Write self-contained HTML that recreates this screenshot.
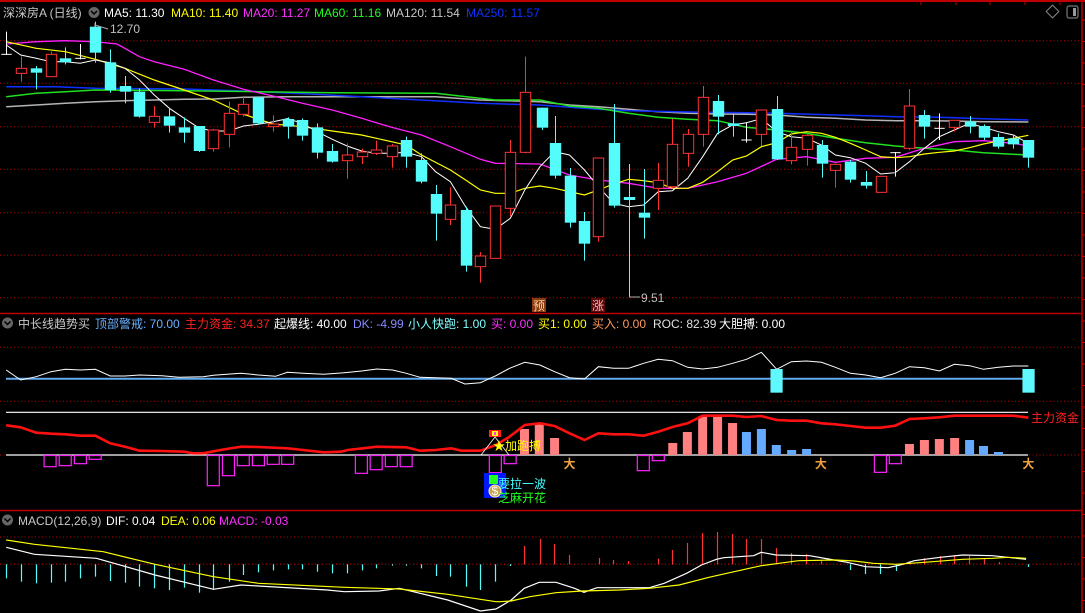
<!DOCTYPE html>
<html><head><meta charset="utf-8"><style>
html,body{margin:0;padding:0;background:#000;overflow:hidden}
svg{display:block}
text{font-family:"Liberation Sans","Noto Sans CJK SC",sans-serif;font-size:12px}
</style></head><body>
<svg id="s" width="1085" height="613" viewBox="0 0 1085 613" xmlns="http://www.w3.org/2000/svg">
<rect width="1085" height="613" fill="#000"/>
<!-- borders -->
<line x1="0" y1="1" x2="1085" y2="1" stroke="#c00000" stroke-width="2"/>
<line x1="1082" y1="0" x2="1082" y2="613" stroke="#c00000" stroke-width="1.5"/>
<line x1="0" y1="313.5" x2="1082" y2="313.5" stroke="#c00000" stroke-width="1.5"/>
<line x1="0" y1="510.5" x2="1082" y2="510.5" stroke="#c00000" stroke-width="1.5"/>
<g stroke="#c00000"><line x1="921" y1="0" x2="921" y2="5"/><line x1="956" y1="0" x2="956" y2="5"/><line x1="990" y1="0" x2="990" y2="5"/><line x1="1025" y1="0" x2="1025" y2="5"/><line x1="1060" y1="0" x2="1060" y2="5"/></g>
<!-- top right icons -->
<rect x="1048" y="7" width="9" height="9" fill="none" stroke="#888" transform="rotate(45 1052.5 11.5)"/>
<rect x="1067" y="6" width="11" height="12" rx="2" fill="none" stroke="#777" stroke-width="1.2"/>
<rect x="1073" y="8" width="3" height="8" fill="#999"/>
<g id="g"></g>
<!-- header main -->
<text x="3" y="17" fill="#c8c8c8">深深房A (日线)</text>
<circle cx="94" cy="12.5" r="5.5" fill="#666"/><path d="M91 11 L94 14 L97 11" stroke="#000" stroke-width="1.5" fill="none"/>
<text x="104" y="17" fill="#fff">MA5: 11.30</text>
<text x="171" y="17" fill="#ffff00">MA10: 11.40</text>
<text x="243" y="17" fill="#ff30ff">MA20: 11.27</text>
<text x="314" y="17" fill="#20ff20">MA60: 11.16</text>
<text x="386" y="17" fill="#c8c8c8">MA120: 11.54</text>
<text x="466" y="17" fill="#1030ff">MA250: 11.57</text>
<text x="110" y="33" fill="#c0c0c0">12.70</text>
<path d="M95 25 L108 29" stroke="#aaa"/><path d="M95 23 V27" stroke="#aaa"/>
<text x="641" y="302" fill="#c0c0c0">9.51</text>
<path d="M629 297 H640" stroke="#aaa"/>
<rect x="532" y="298" width="14" height="14" fill="#8a3a10"/><text x="533" y="310" fill="#ffd0a0">预</text>
<rect x="591" y="298" width="14" height="14" fill="#5a0a0a"/><text x="592" y="310" fill="#ffb0b0">涨</text>
<!-- header panel 2 -->
<circle cx="7.5" cy="323" r="5.5" fill="#666"/><path d="M4.5 321.5 L7.5 324.5 L10.5 321.5" stroke="#000" stroke-width="1.5" fill="none"/>
<text x="18" y="328" fill="#c8c8c8">中长线趋势买</text>
<text x="95" y="328" fill="#6ab0ff">顶部警戒: 70.00</text>
<text x="185" y="328" fill="#ff2020">主力资金: 34.37</text>
<text x="274" y="328" fill="#fff">起爆线: 40.00</text>
<text x="353" y="328" fill="#8888ff">DK: -4.99</text>
<text x="408" y="328" fill="#80ffff">小人快跑: 1.00</text>
<text x="491" y="328" fill="#ff30ff">买: 0.00</text>
<text x="538" y="328" fill="#ffff00">买1: 0.00</text>
<text x="592" y="328" fill="#ff9a60">买入: 0.00</text>
<text x="653" y="328" fill="#e0e0e0">ROC: 82.39</text>
<text x="719" y="328" fill="#fff">大胆搏: 0.00</text>
<text x="1031" y="422" fill="#ff2020">主力资金</text>
<!-- header MACD -->
<circle cx="7.5" cy="520" r="5.5" fill="#666"/><path d="M4.5 518.5 L7.5 521.5 L10.5 518.5" stroke="#000" stroke-width="1.5" fill="none"/>
<text x="18" y="525" fill="#c8c8c8">MACD(12,26,9)</text>
<text x="106" y="525" fill="#fff">DIF: 0.04</text>
<text x="161" y="525" fill="#ffff00">DEA: 0.06</text>
<text x="219" y="525" fill="#ff30ff">MACD: -0.03</text>
<!-- special icons -->
<rect x="489" y="430" width="12" height="7" fill="#ff2020"/><rect x="492" y="431" width="6" height="5" fill="#ffff00"/><rect x="494" y="432" width="2" height="3" fill="#ff30ff"/>
<path d="M481 455 L495 437 L509 455" stroke="#fff" fill="none" stroke-width="0.8"/>
<text x="493" y="450" fill="#ffff00" font-size="13">★加跑搏</text>
<rect x="484" y="473" width="22" height="25" fill="#0018ff"/>
<rect x="489" y="475" width="9" height="9" fill="#20ff20"/>
<circle cx="495" cy="491" r="6" fill="#c8a050" stroke="#fff3c0"/><text x="491.5" y="495" fill="#fff" font-size="9">$</text>
<text x="498" y="488" fill="#40ffff">要拉一波</text>
<text x="498" y="502" fill="#20ff20">芝麻开花</text>
</svg>
<script>
var NS="http://www.w3.org/2000/svg",G=document.getElementById('g');
function el(t,a){var e=document.createElementNS(NS,t);for(var k in a)e.setAttribute(k,a[k]);G.appendChild(e);return e;}
function X5(z){return z/2.904}function X6(z){return 540+z/2.877}
// grids
[40.7,83.3,126.7,169.3,212.7,255.3,297.7].forEach(function(y){el('line',{x1:0,x2:1082,y1:y,y2:y,stroke:'#c00000','stroke-dasharray':'1 2.5'})});
[347.3,401.3,455].forEach(function(y){el('line',{x1:0,x2:1082,y1:y,y2:y,stroke:'#c00000','stroke-dasharray':'1 2.5'})});
[537,564.3].forEach(function(y){el('line',{x1:0,x2:1082,y1:y,y2:y,stroke:'#c00000','stroke-dasharray':'1 2.5'})});
for(var ty=20;ty<610;ty+=21.5){el('line',{x1:1082,x2:1085,y1:ty,y2:ty,stroke:'#c00000'})}
function line(pts5,pts6,col,w,oy,sy){
 var p=[];oy=oy||20;
 pts5.forEach(function(q){p.push(X5(q[0]).toFixed(1)+','+(oy+q[1]/3).toFixed(1))});
 (pts6||[]).forEach(function(q){p.push(X6(q[0]).toFixed(1)+','+(oy+q[1]/3).toFixed(1))});
 el('polyline',{points:p.join(' '),fill:'none',stroke:col,'stroke-width':w||1});
}
// MAs
line([[18,260],[105,255],[190,250],[277,245],[363,242],[448,240],[535,238],[620,237],[707,232],[835,230],[1008,230],[1265,230],[1395,240],[1568,245]],[[85,255],[168,260],[255,268],[340,275],[425,280],[511,282],[594,283],[681,285],[767,292],[850,295],[937,300],[1022,302],[1106,302],[1192,303],[1276,305],[1405,306]],'#b4b4b4',1.5);
line([[18,200],[160,200],[277,205],[535,207],[707,213],[900,222],[1050,230],[1180,238],[1395,250],[1568,255]],[[85,262],[168,268],[255,272],[425,276],[594,278],[681,280],[850,285],[937,287],[1022,290],[1149,292],[1276,296],[1405,300]],'#1030ff',1.5);
line([[18,230],[105,220],[190,215],[277,210],[535,212],[750,215],[965,218],[1265,220],[1438,240],[1568,240]],[[85,258],[168,265],[255,280],[340,292],[425,298],[511,302],[594,322],[681,330],[767,340],[850,355],[937,368],[1022,378],[1106,385],[1192,390],[1276,398],[1362,403],[1405,405]],'#20e020',1.5);
line([[18,72],[105,65],[190,62],[277,65],[340,72],[405,110],[448,125],[535,148],[620,180],[707,208],[793,228],[878,250],[965,270],[1050,295],[1137,322],[1224,345],[1308,380],[1395,418],[1438,430],[1568,432]],[[85,465],[168,480],[255,490],[340,505],[425,505],[511,485],[594,460],[681,418],[767,410],[850,427],[937,415],[1022,412],[1106,385],[1192,365],[1276,362],[1362,370],[1405,378]],'#ff20ff',1.3);
line([[18,65],[105,85],[190,95],[277,118],[363,145],[448,180],[535,210],[620,240],[707,283],[793,312],[878,320],[965,333],[1050,345],[1137,365],[1180,375],[1224,405],[1308,450],[1352,480],[1395,510],[1438,520],[1482,520],[1524,505],[1568,498]],[[42,505],[128,525],[168,510],[212,492],[255,478],[298,482],[340,488],[381,505],[425,505],[468,487],[511,455],[554,420],[594,408],[637,380],[681,368],[723,342],[767,335],[810,340],[850,352],[893,370],[937,390],[980,410],[1022,413],[1063,410],[1106,402],[1149,397],[1192,393],[1236,383],[1276,372],[1319,363],[1362,355],[1405,346]],'#ffff00',1.2);
line([[18,75],[60,105],[105,115],[148,125],[190,125],[233,130],[277,120],[320,128],[363,145],[405,180],[448,225],[492,265],[535,295],[579,325],[620,333],[664,333],[707,318],[750,313],[793,305],[835,296],[878,310],[921,335],[965,358],[1008,378],[1050,393],[1093,400],[1137,400],[1180,397],[1224,410],[1265,455],[1308,485],[1352,560],[1395,620],[1438,628],[1482,595],[1524,510],[1568,440]],[[42,395],[85,405],[128,450],[168,500],[212,550],[255,560],[298,555],[340,515],[381,512],[425,475],[468,410],[511,340],[554,315],[594,308],[637,296],[681,335],[723,350],[767,355],[810,375],[850,405],[893,413],[937,430],[980,462],[1022,458],[1063,425],[1106,385],[1149,350],[1192,330],[1236,310],[1276,322],[1319,335],[1362,345],[1405,370]],'#ffffff',1);
// candles [zx,type,bodyTop,bodyBot,hi,lo]
var C5=[[18,'w',103,103,35,105],[62,'r',145,160,110,185],[105,'c',145,158,138,208],[148,'r',103,170,95,170],[190,'c',115,127,82,133],[233,'w',115,115,72,118],[277,'c',20,98,5,128],[320,'c',127,210,88,218],[363,'c',198,215,168,250],[405,'c',215,290,205,293],[448,'r',289,307,258,323],[492,'c',289,317,265,338],[535,'c',322,338,292,368],[579,'c',318,393,318,396],[620,'r',330,386,327,395],[664,'r',280,343,245,382],[707,'r',253,283,228,290],[750,'c',232,310,230,312],[793,'r',312,320,286,335],[835,'c',297,320,292,356],[878,'c',300,347,295,362],[921,'c',322,398,310,415],[965,'c',393,425,372,428],[1008,'r',405,422,370,476],[1050,'r',396,410,386,432],[1093,'r',390,400,362,405],[1137,'r',378,410,372,443],[1180,'c',360,410,350,443],[1224,'c',420,485,400,490],[1265,'c',522,581,495,662],[1308,'r',555,598,502,615],[1352,'c',570,737,560,755],[1395,'r',708,740,696,788],[1438,'r',558,715,558,715],[1482,'r',397,565,360,590],[1524,'r',217,397,110,400]];
var C6=[[5,'c',263,323,263,330],[42,'c',369,467,288,476],[85,'c',467,608,444,623],[128,'c',603,671,576,722],[168,'r',414,650,414,665],[212,'c',369,557,252,563],[255,'c',531,540,432,830],[298,'c',578,593,447,656],[340,'r',481,505,429,570],[381,'r',373,500,297,505],[425,'r',343,400,327,440],[468,'r',232,343,198,380],[511,'c',243,290,225,343],[554,'c',310,318,280,350],[594,'w',360,360,307,368],[637,'r',270,343,268,378],[681,'c',267,418,228,420],[723,'r',382,422,335,433],[767,'r',346,388,340,437],[810,'c',375,431,360,473],[850,'r',433,451,430,503],[893,'c',425,479,420,488],[937,'c',486,497,453,506],[980,'r',469,517,469,517],[1022,'w',398,398,396,470],[1063,'r',258,385,207,390],[1106,'c',285,320,270,356],[1149,'w',325,325,280,360],[1192,'r',301,322,300,335],[1236,'c',305,320,288,340],[1276,'c',318,353,313,360],[1319,'c',351,380,340,386],[1362,'c',355,373,345,386],[1405,'c',360,413,360,443]];
function candle(x,c){var t=20+c[2]/3,b=20+c[3]/3,h=20+c[4]/3,l=20+c[5]/3,hw=5.2;x=Math.round(x)+0.5;
 if(c[1]=='r'){el('line',{x1:x,x2:x,y1:h,y2:t,stroke:'#ff3232'});el('line',{x1:x,x2:x,y1:b,y2:l,stroke:'#ff3232'});el('rect',{x:x-hw,y:t,width:hw*2,height:Math.max(b-t,1),fill:'#000',stroke:'#ff3232','stroke-width':1});}
 else if(c[1]=='c'){el('line',{x1:x,x2:x,y1:h,y2:l,stroke:'#54fcfc'});el('rect',{x:x-hw-0.5,y:t,width:hw*2+1,height:Math.max(b-t,2),fill:'#54fcfc'});}
 else{el('line',{x1:x,x2:x,y1:h,y2:l,stroke:'#fff'});el('line',{x1:x-hw,x2:x+hw,y1:t,y2:t,stroke:'#fff'});}}
C5.forEach(function(c){candle(X5(c[0]),c)});C6.forEach(function(c){candle(X6(c[0]),c)});
// panel 2
el('line',{x1:6,x2:1028,y1:378.7,y2:378.7,stroke:'#60aaf0','stroke-width':2});
el('line',{x1:6,x2:1028,y1:412.3,y2:412.3,stroke:'#fff','stroke-width':1.2});
el('line',{x1:6,x2:1028,y1:455,y2:455,stroke:'#fff','stroke-width':1.2});
line([[18,105],[60,135],[105,125],[148,110],[190,103],[233,105],[277,103],[320,123],[363,123],[405,120],[470,122],[520,127],[590,125],[620,121],[700,115],[750,120],[800,124],[835,112],[880,115],[940,118],[1000,113],[1050,108],[1095,102],[1140,105],[1180,115],[1220,127],[1310,130],[1350,147],[1395,143],[1440,122],[1480,100],[1524,82],[1568,90]],[[42,110],[85,128],[128,132],[168,95],[212,100],[255,100],[298,85],[340,73],[381,77],[425,97],[468,102],[511,97],[554,85],[594,73],[637,52],[681,103],[723,80],[767,78],[810,82],[850,97],[893,115],[937,120],[980,128],[1022,115],[1063,95],[1106,98],[1149,108],[1192,88],[1236,92],[1276,103],[1319,97],[1362,93],[1405,93]],'#fff',1,335);
el('rect',{x:X6(663),y:335+102/3,width:12.2,height:71/3,fill:'#5ff8ff'});
el('rect',{x:X6(1388),y:335+102/3,width:12.2,height:71/3,fill:'#5ff8ff'});
// magenta hollow
[[128,395],[172,392],[216,386],[259,373],[602,452],[646,422],[689,392],[733,392],[776,388],[818,388],[1032,415],[1075,404],[1119,395],[1162,395],[1421,413],[1464,386]].forEach(function(b){el('rect',{x:X5(b[0]),y:455.5,width:12,height:b[1]/3+335-455.5,fill:'none',stroke:'#ff20ff','stroke-width':1.2})});
[[280,407],[323,377],[962,412],[1005,386]].forEach(function(b){el('rect',{x:X6(b[0]),y:455.5,width:12,height:b[1]/3+335-455.5,fill:'none',stroke:'#ff20ff','stroke-width':1.2})});
// bars
function bar(x,top,col){el('rect',{x:x,y:335+top/3,width:9,height:455-(335+top/3),fill:col})}
bar(X5(1510),282,'#ff8080');bar(X5(1553),265,'#ff8080');
[[29,309],[369,324],[411,291],[455,244],[498,244],[541,264],[1050,327],[1093,315],[1136,312],[1180,309]].forEach(function(b){bar(X6(b[0]),b[1],'#ff8080')});
[[581,291],[624,282],[667,330],[711,345],[754,342],[1223,315],[1263,333],[1306,351]].forEach(function(b){bar(X6(b[0]),b[1],'#66aaff')});
line([[18,271],[60,277],[105,293],[148,296],[190,298],[233,302],[277,302],[320,325],[363,335],[405,347],[470,348],[535,350],[560,355],[590,355],[640,345],[700,335],[750,336],[835,340],[880,345],[940,352],[990,350],[1010,345],[1095,335],[1180,337],[1220,347],[1265,345],[1310,340],[1340,347],[1395,347],[1440,330],[1480,305],[1524,270],[1568,265]],[[42,273],[85,295],[128,315],[168,295],[212,298],[255,298],[298,302],[340,290],[381,276],[425,265],[468,242],[511,242],[554,242],[594,246],[637,243],[681,255],[723,257],[767,257],[810,265],[850,268],[893,273],[937,278],[980,278],[1022,272],[1063,252],[1106,250],[1149,247],[1192,242],[1236,242],[1276,242],[1362,242],[1405,248]],'#ff1010',2.6,335);
// runners
[85,808,1405].forEach(function(z){var x=X6(z);var t=el('text',{x:x-6,y:468,fill:'#f0a040','font-size':'13','font-weight':'bold'});t.textContent='大';});
// MACD
el('line',{x1:0,x2:1082,y1:564.3,y2:564.3,stroke:'#c00000','stroke-dasharray':'1 2.5'});
[[18,220],[62,230],[105,235],[148,233],[190,230],[233,220],[277,215],[320,228],[363,233],[405,245],[448,250],[492,255],[535,248],[579,263],[620,253],[664,230],[707,210],[750,202],[793,196],[835,193],[878,193],[921,200],[965,205],[1008,205],[1050,196],[1093,190],[1137,182],[1180,182],[1224,190],[1265,213],[1308,215],[1352,245],[1395,255],[1438,230],[1482,183]].forEach(function(b){var x=Math.round(X5(b[0]))+0.5;el('line',{x1:x,x2:x,y1:564.3,y2:505+b[1]/3,stroke:'#54fcfc','stroke-width':1.2})});
function X10(z){return 500+z/2.68}
[[65,63],[106,42],[146,57],[186,90],[264,99],[304,105],[344,108],[424,101],[462,75],[502,54],[542,24],[582,21],[623,27],[660,42],[700,42],[740,69],[781,84],[821,87],[861,108],[1097,108],[1137,99],[1178,93],[1218,90],[1258,93],[1296,99],[1336,111]].forEach(function(b){var x=Math.round(X10(b[0]))+0.5;el('line',{x1:x,x2:x,y1:564.3,y2:525+b[1]/3,stroke:'#ff3232','stroke-width':1.2})});
[[939,135],[979,147],[1019,147],[1060,138],[1416,126]].forEach(function(b){var x=Math.round(X10(b[0]))+0.5;el('line',{x1:x,x2:x,y1:564.3,y2:525+b[1]/3,stroke:'#54fcfc','stroke-width':1.2})});
function pl(a,b,col){var p=[];a.forEach(function(q){p.push(X5(q[0]).toFixed(1)+','+(505+q[1]/3).toFixed(1))});b.forEach(function(q){p.push(X10(q[0]).toFixed(1)+','+(525+q[1]/3).toFixed(1))});el('polyline',{points:p.join(' '),fill:'none',stroke:col,'stroke-width':1.2})}
pl([[18,127],[100,148],[280,160],[450,210],[620,253],[700,240],[950,255],[1000,260],[1100,258],[1160,250],[1300,285],[1395,318],[1440,312]],[[0,245],[30,225],[65,190],[105,172],[150,172],[200,190],[225,202],[260,188],[400,188],[440,175],[500,145],[540,120],[580,103],[600,98],[680,92],[700,82],[740,90],[830,92],[880,102],[930,112],[980,125],[1040,128],[1080,118],[1110,107],[1180,97],[1240,90],[1320,92],[1360,97],[1410,103]],'#fff');
pl([[18,105],[100,118],[300,140],[450,178],[620,215],[750,235],[1000,247],[1160,252],[1300,268],[1440,290]],[[0,230],[30,228],[80,215],[150,203],[220,198],[320,195],[400,190],[480,180],[560,157],[620,142],[700,122],[760,113],[800,107],[900,105],[950,108],[1000,115],[1060,118],[1100,115],[1160,110],[1240,103],[1320,100],[1360,97],[1410,100]],'#ffff00');
</script>
</body></html>
